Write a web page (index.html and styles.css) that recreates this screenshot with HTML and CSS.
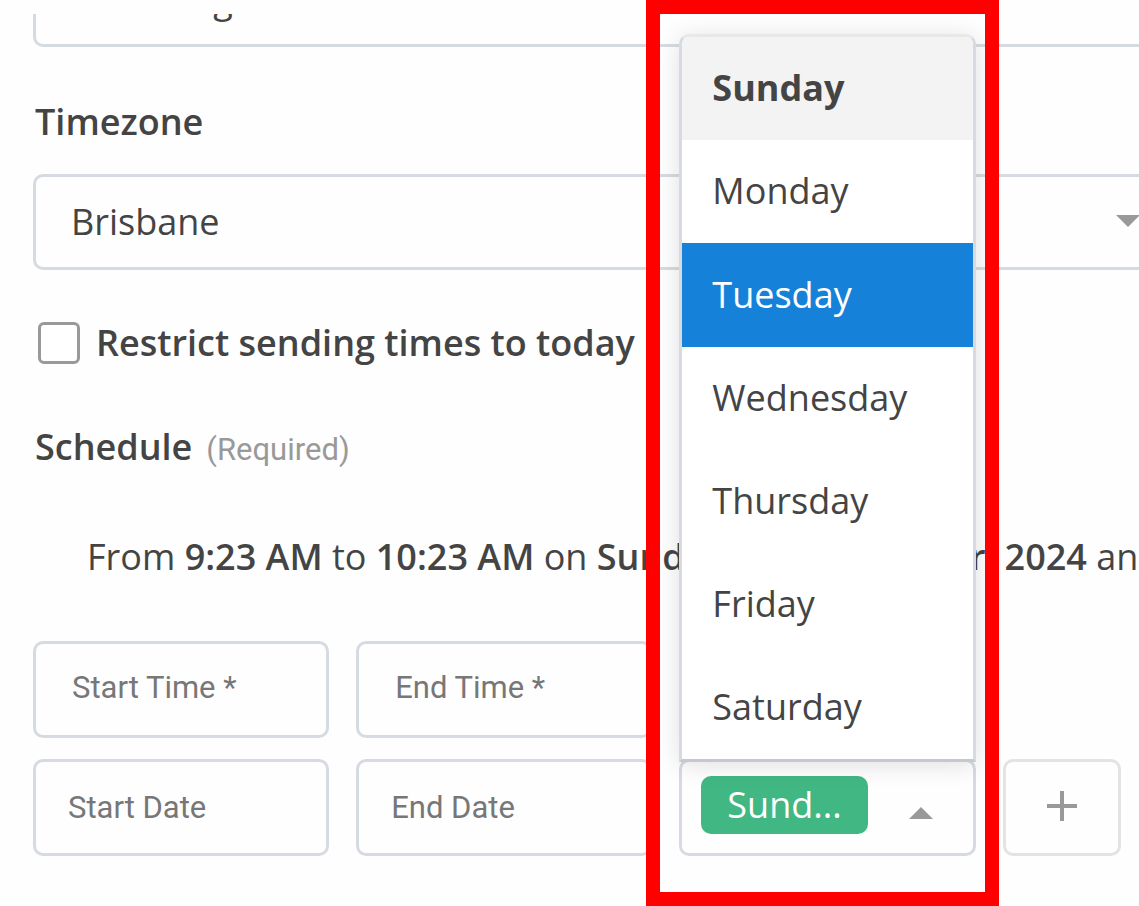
FILE: index.html
```html
<!DOCTYPE html>
<html lang="en">
<head>
<meta charset="utf-8">
<title>Sending schedule</title>
<link rel="stylesheet" href="styles.css">
</head>
<body>
<form class="form">
  <div class="clip">
    <input class="field wide" type="text" aria-label="Frequency" value="Recurring">
  </div>

  <label class="label zone-label" for="zone">Timezone</label>
  <div class="zone">
    <select class="field wide" id="zone"><option>Brisbane</option></select>
    <svg class="caret zone-caret" viewBox="0 0 24 12" aria-hidden="true"><path d="M0 0h24L12 12z"/></svg>
  </div>

  <label class="check label"><input class="box" type="checkbox">Restrict sending times to today</label>

  <div class="heading"><span class="label">Schedule</span><span class="required">(Required)</span></div>

  <p class="summary">From <b>9:23 AM</b> to <b>10:23 AM</b> on <b>Sunday, 15 September, 2024</b> an</p>

  <div class="grid">
    <input class="field time" type="text" placeholder="Start Time *" aria-label="Start Time">
    <input class="field time" type="text" placeholder="End Time *" aria-label="End Time">
    <input class="field date start" type="text" placeholder="Start Date" aria-label="Start Date">
    <input class="field date" type="text" placeholder="End Date" aria-label="End Date">
    <div class="days">
      <button class="field picker" type="button" aria-haspopup="listbox" aria-expanded="true" aria-label="Days: Sunday">
        <span class="chip">Sund...</span>
        <svg class="caret" viewBox="0 0 24 12" aria-hidden="true"><path d="M0 12h24L12 0z"/></svg>
      </button>
      <ul class="menu" role="listbox" aria-label="Days">
        <li class="option selected" role="option" aria-selected="true">Sunday</li>
        <li class="option" role="option">Monday</li>
        <li class="option active" role="option">Tuesday</li>
        <li class="option" role="option">Wednesday</li>
        <li class="option" role="option">Thursday</li>
        <li class="option" role="option">Friday</li>
        <li class="option" role="option">Saturday</li>
      </ul>
      <div class="frame"></div>
    </div>
    <button class="field add" type="button" aria-label="Add">
      <svg class="plus" viewBox="0 0 32 32" aria-hidden="true"><path d="M16 1v30M1 16h30"/></svg>
    </button>
  </div>
</form>
</body>
</html>
```
FILE: styles.css
```css
* {
  box-sizing: border-box;
}

body {
  margin: 0;
  overflow: hidden;
  background: #fefefe;
  color: #444;
  font: 36px/48px "Open Sans", sans-serif;
}

.form {
  display: flex;
  flex-direction: column;
  padding: 14px 18px 50px 33px;
  overflow: hidden;
}

.field {
  width: 100%;
  height: 97px;
  margin: 0;
  border: 3px solid #d6dbe1;
  border-radius: 10px;
  background: #fefefe;
  color: #444;
  font: inherit;
}

.wide {
  height: 96px;
  padding: 0 35px;
  appearance: none;
}

.clip {
  display: flex;
  align-items: flex-end;
  height: 33px;
  margin-right: -45px;
  overflow: hidden;
}

.clip .wide {
  flex: none;
}

.label {
  font-weight: 600;
  line-height: 48px;
}

.zone-label {
  margin: 51px 0 28px 2px;
}

.zone {
  position: relative;
  height: 96px;
  margin-right: -45px;
}

.caret {
  width: 24px;
  height: 12px;
  fill: #999;
}

.zone-caret {
  position: absolute;
  top: 41px;
  right: 26px;
}

.check {
  display: flex;
  align-items: center;
  gap: 16px;
  margin: 49px 0 0 5px;
}

.box {
  width: 42px;
  height: 42px;
  margin: 0;
  border: 3px solid #999;
  border-radius: 6px;
  background: #fff;
  appearance: none;
}

.heading {
  display: flex;
  align-items: baseline;
  gap: 14px;
  margin: 56px 0 0 2px;
}

.required {
  color: #999;
  font: 31px/48px Roboto, sans-serif;
}

.summary {
  margin: 59px -18px 60px 54px;
  white-space: nowrap;
}

.summary b {
  font-weight: 600;
}

.grid {
  display: grid;
  grid-template-columns: 5fr 5fr 5fr 2fr;
  gap: 21px 27px;
}

.time,
.date {
  padding: 0 32px;
  font: 31px/36px Roboto, sans-serif;
}

.time {
  padding: 0 36px 4px;
}

.field::placeholder {
  color: #777;
  opacity: 1;
}

.start {
  grid-column: 1;
}

.days {
  position: relative;
}

.picker {
  display: flex;
  align-items: center;
  justify-content: space-between;
  padding: 0 40px 6px 19px;
  text-align: left;
}

.chip {
  height: 58px;
  padding: 0 26px;
  border-radius: 10px;
  background: #41b883;
  color: #fff;
  line-height: 58px;
}

.picker .caret {
  margin-top: 16px;
}

.menu {
  position: absolute;
  bottom: 94px;
  left: 0;
  width: 100%;
  margin: 0;
  padding: 0;
  border: 3px solid #d6dbe1;
  border-top-color: #e8e8e8;
  border-bottom-color: #c3c9cf;
  border-radius: 10px 10px 0 0;
  background: #fff;
  box-shadow: 0 3px 24px rgba(0, 0, 0, 0.12);
  list-style: none;
}

.option {
  padding: 27px 30px 28px;
}

.selected {
  border-radius: 7px 7px 0 0;
  background: #f3f3f3;
  font-weight: 700;
}

.active {
  padding: 28px 30px;
  background: #1681d9;
  color: #fff;
}

.frame {
  position: absolute;
  bottom: -50px;
  left: -33px;
  right: -23px;
  height: 906px;
  border: 14px solid #f00;
  pointer-events: none;
}

.add {
  display: grid;
  place-items: center;
  padding: 0 0 4px;
  border-color: #e3e3e3;
}

.plus {
  width: 32px;
  height: 32px;
  fill: none;
  stroke: #999;
  stroke-width: 4;
}
```
